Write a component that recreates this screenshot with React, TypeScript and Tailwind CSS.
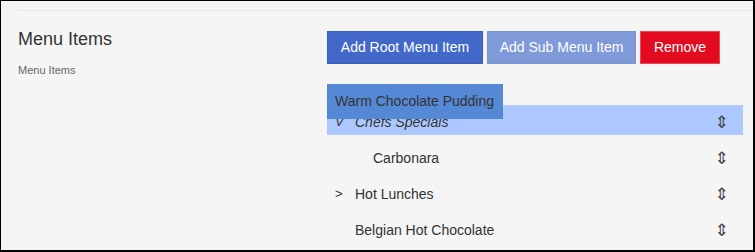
import React from 'react';

const rows = [
  { label: 'Chefs Specials', toggle: 'V', depth: 0, selected: true },
  { label: 'Carbonara', toggle: '', depth: 1, selected: false },
  { label: 'Hot Lunches', toggle: '>', depth: 0, selected: false },
  { label: 'Belgian Hot Chocolate', toggle: '', depth: 0, selected: false },
];

const App = () => {
  return (
    <div className="w-[755px] h-[252px] overflow-hidden border-l border-t border-r-2 border-b-2 border-black bg-[#f5f5f5] font-['Liberation_Sans',Arial,sans-serif] text-[#333]">
      <div className="ml-[17px] mt-[9px] border-t border-[#e6e6e6]" />
      <div className="flex">
        <div className="w-[326px] pl-[17px] pt-[16px]">
          <h1 className="text-[18px] leading-[24px] text-[#333]">Menu Items</h1>
          <p className="mt-[12px] text-[11px] leading-[14px] text-[#666]">Menu Items</p>
        </div>
        <div className="relative w-[416px] pt-[20px]">
          <div className="flex gap-[4px]">
            <button className="h-[33px] w-[156px] border border-[#3a60bd] bg-[#4269ca] text-[14px] text-white">Add Root Menu Item</button>
            <button className="h-[33px] w-[149px] border border-[#7a93d3] bg-[#8099d9] text-[14px] text-white">Add Sub Menu Item</button>
            <button className="h-[33px] w-[80px] border border-[#ea4655] bg-[#e30b20] text-[14px] text-white">Remove</button>
          </div>
          <ul className="mt-[41px]">
            {rows.map((row) => (
              <li
                key={row.label}
                className={`flex h-[30px] mb-[6px] items-center pt-[4px] pl-[8px] pr-[14px] text-[14px] ${row.selected ? 'bg-[#adc8ff] italic' : ''}`}
              >
                <span className="w-[20px] text-[13px]">{row.toggle}</span>
                <span className={`flex-1 ${row.depth ? 'pl-[18px]' : ''}`}>{row.label}</span>
                <span className="not-italic font-['DejaVu_Sans',sans-serif] text-[17px] leading-[20px] text-[#444]">⇕</span>
              </li>
            ))}
          </ul>
          <div className="absolute left-0 top-[73px] flex h-[35px] w-[176px] items-center bg-[#5589d6] pl-[8px] text-[14px] text-[#333]">
            Warm Chocolate Pudding
          </div>
        </div>
      </div>
    </div>
  );
};

export default App;
